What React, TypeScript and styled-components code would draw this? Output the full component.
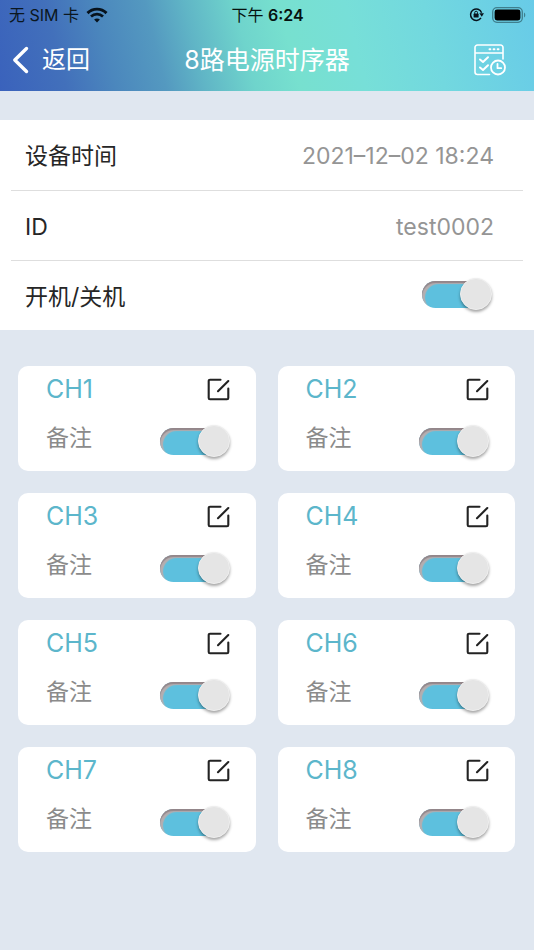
import React, { useState } from "react";
import styled, { createGlobalStyle } from "styled-components";

const GlobalStyle = createGlobalStyle`
  *, *::before, *::after { box-sizing: border-box; }
  body {
    margin: 0;
    background: #e0e7f0;
    color: #262626;
    font-family: Inter, "Noto Sans CJK SC", sans-serif;
  }
  button { font: inherit; color: inherit; border: 0; padding: 0; background: none; cursor: pointer; }
`;

const Header = styled.header`
  color: #fff;
  background: linear-gradient(76deg, #3a62bc 0%, #4270bb 12%, #4b87bd 21%, #5499c0 30%, #60b5c6 37%, #6fd4cc 46%, #77e0cf 54%, #77dfd8 66%, #72d8df 80%, #68cbe8 100%);
`;

const StatusBar = styled.div`
  display: grid;
  grid-template-columns: 1fr auto 1fr;
  align-items: center;
  height: 29px;
  padding: 0 8px 0 9px;
  color: #0b1720;
  font-size: 16px;
  line-height: 24px;
`;

const Carrier = styled.div`
  display: flex;
  align-items: center;
  gap: 7px;
`;

const Clock = styled.time`
  color: #06120f;
`;

const ClockDigits = styled.span`
  font-weight: 600;
`;

const StatusIcons = styled.div`
  display: flex;
  align-items: center;
  justify-content: flex-end;
  gap: 8px;
`;

const NavBar = styled.div`
  display: grid;
  grid-template-columns: 1fr auto 1fr;
  align-items: center;
  height: 62px;
  padding: 0 12px;
`;

const BackButton = styled.button`
  display: flex;
  align-items: center;
  justify-self: start;
  gap: 12px;
  font-size: 24px;
  line-height: 32px;
`;

const Title = styled.h1`
  margin: 0;
  font-size: 25px;
  font-weight: 400;
  line-height: 36px;
`;

const ScheduleButton = styled.button`
  display: flex;
  justify-self: end;
  margin-right: 16px;
`;

const Panel = styled.section`
  margin-top: 29px;
  padding: 0 11px;
  background: #fff;
`;

const InfoRow = styled.div<{ $control?: boolean }>`
  display: flex;
  align-items: ${(p) => (p.$control ? "flex-start" : "center")};
  justify-content: space-between;
  height: 70px;
  padding: ${(p) => (p.$control ? "17px 31px 0 14px" : "2px 29px 0 14px")};
  font-size: 23px;
  line-height: 38px;

  & + & { border-top: 1px solid #dedede; }
`;

const Value = styled.span`
  color: #959595;
`;

const Switch = styled.input`
  appearance: none;
  position: relative;
  flex: none;
  width: 70px;
  height: 32px;
  margin: 0;
  cursor: pointer;

  &::before {
    content: "";
    position: absolute;
    inset: 3px 4px 2px 0;
    border-radius: 14px;
    background: #c4c4c6;
    box-shadow: inset 0 2px 1px #93868a, inset 3px 3px 1px #b5aeb0;
  }
  &:checked::before {
    background: #5dc0de;
  }
  &::after {
    content: "";
    position: absolute;
    top: 0;
    left: 0;
    width: 32px;
    height: 32px;
    border: 1px solid #efefef;
    border-radius: 50%;
    background: #e5e5e5;
    box-shadow: 0 2px 3px rgba(0, 0, 0, 0.35);
  }
  &:checked::after { left: 38px; }
`;

const ChannelGrid = styled.main`
  display: grid;
  grid-template-columns: 1fr 1fr;
  gap: 22px;
  padding: 36px 19px 36px 18px;
`;

const ChannelCard = styled.article`
  display: flex;
  flex-direction: column;
  gap: 12px;
  height: 105px;
  padding: 5px 26px 0 28px;
  border-radius: 10px;
  background: #fff;
`;

const CardRow = styled.div`
  display: flex;
  align-items: center;
  justify-content: space-between;
  height: 36px;
`;

const NoteRow = styled(CardRow)`
  align-items: flex-end;
  height: 38px;
`;

const ChannelName = styled.h2`
  margin: 0;
  color: #5cb6cb;
  font-size: 25px;
  font-weight: 400;
  line-height: 36px;
`;

const Note = styled.span`
  color: #8b8b8b;
  font-size: 23px;
  line-height: 38px;
`;

const EditButton = styled.button`
  display: flex;
`;

const WifiIcon = () => (
  <svg width="22" height="16" viewBox="0 0 22 16" fill="none" stroke="#07121c" aria-hidden="true">
    <path d="M1.5 6.1C6.8 .8 15.2.8 20.5 6.1" strokeWidth="2.9" />
    <path d="M5 9.6c3.5-3.3 8.500-3.300 12 0" strokeWidth="2.700" />
    <path d="M11 15.400l-2.900-2.900c1.600-1.500 4.200-1.500 5.800 0z" fill="#07121c" stroke="none" />
  </svg>
);

const RotationLockIcon = () => (
  <svg width="15" height="15" viewBox="0 0 15 15" fill="none" stroke="#07121c" aria-hidden="true">
    <path d="M12 10.900a5.700 5.700 0 1 1 .6-5.200" strokeWidth="1.500" />
    <path d="M10.300 6.300h4.700l-2.200 3.400z" fill="#07121c" stroke="none" />
    <rect x="4.600" y="6.600" width="5" height="3.900" rx=".6" fill="#07121c" stroke="none" />
    <path d="M5.700 6.800V5.600a1.400 1.400 0 0 1 2.800 0v1.200" strokeWidth="1" />
  </svg>
);

const BatteryIcon = () => (
  <svg width="34" height="16" viewBox="0 0 34 16" fill="none" aria-hidden="true">
    <rect x=".7" y=".7" width="29.600" height="14.600" rx="4.200" stroke="#3f7f8e" strokeWidth="1.300" />
    <rect x="2.600" y="2.600" width="25.800" height="10.800" rx="2.400" fill="#000" />
    <path d="M32 5.500v5c1.700-.8 1.700-4.200 0-5z" fill="#3f7f8e" />
  </svg>
);

const BackIcon = () => (
  <svg width="18" height="28" viewBox="0 0 18 28" fill="none" stroke="#fff" strokeWidth="3.400" strokeLinecap="round" strokeLinejoin="round" aria-hidden="true">
    <path d="M14.500 2.500 2.800 14l11.700 11.500" />
  </svg>
);

const ScheduleIcon = () => (
  <svg width="32" height="32" viewBox="0 0 32 32" fill="none" stroke="#fff" strokeWidth="1.600" strokeLinecap="round" strokeLinejoin="round" aria-hidden="true">
    <path d="M15.500 30.500H3.500a2.500 2.500 0 0 1-2.500-2.500V3.500A2.500 2.500 0 0 1 3.500 1h23A2.500 2.500 0 0 1 29 3.500V15M1 9h28" />
    <path d="M15.500 5.200h.8M19.600 5.200h.8M23.700 5.200h.8" strokeWidth="2" />
    <path d="m6 15.500 3 2.500 5-4.700M6 23.500l3 2.500 5-4.700" strokeWidth="2" />
    <circle cx="24" cy="23.500" r="7" strokeWidth="1.800" />
    <path d="M23.500 19.800v4.400h3.700" strokeWidth="1.800" />
  </svg>
);

const EditIcon = () => (
  <svg width="23" height="23" viewBox="0 0 23 23" fill="none" stroke="#232323" strokeWidth="2.100" strokeLinecap="round" strokeLinejoin="round" aria-hidden="true">
    <path d="M13.500 1.700H3A1.300 1.300 0 0 0 1.700 3v17A1.300 1.300 0 0 0 3 21.300h17a1.300 1.300 0 0 0 1.300-1.300v-9.500" />
    <path d="M11 13.200 21.300 3" />
  </svg>
);

const channels = ["CH1", "CH2", "CH3", "CH4", "CH5", "CH6", "CH7", "CH8"];

function Channel({ name }: { name: string }) {
  const [on, setOn] = useState(true);
  const noteId = `${name}-note`;
  return (
    <ChannelCard>
      <CardRow>
        <ChannelName id={name}>{name}</ChannelName>
        <EditButton type="button" aria-label={`${name} 备注`}>
          <EditIcon />
        </EditButton>
      </CardRow>
      <NoteRow>
        <Note id={noteId}>备注</Note>
        <Switch type="checkbox" role="switch" aria-labelledby={`${name} ${noteId}`} checked={on} onChange={(e) => setOn(e.target.checked)} />
      </NoteRow>
    </ChannelCard>
  );
}

export default function App() {
  const [power, setPower] = useState(true);
  return (
    <>
      <GlobalStyle />
      <Header>
        <StatusBar>
          <Carrier>
            <span>无 SIM 卡</span>
            <WifiIcon />
          </Carrier>
          <Clock>下午 <ClockDigits>6:24</ClockDigits></Clock>
          <StatusIcons>
            <RotationLockIcon />
            <BatteryIcon />
          </StatusIcons>
        </StatusBar>
        <NavBar>
          <BackButton type="button">
            <BackIcon />
            返回
          </BackButton>
          <Title>8路电源时序器</Title>
          <ScheduleButton type="button" aria-label="定时">
            <ScheduleIcon />
          </ScheduleButton>
        </NavBar>
      </Header>
      <Panel>
        <InfoRow>
          <span>设备时间</span>
          <Value>2021–12–02 18:24</Value>
        </InfoRow>
        <InfoRow>
          <span>ID</span>
          <Value>test0002</Value>
        </InfoRow>
        <InfoRow $control>
          <label htmlFor="power">开机/关机</label>
          <Switch id="power" type="checkbox" role="switch" checked={power} onChange={(e) => setPower(e.target.checked)} />
        </InfoRow>
      </Panel>
      <ChannelGrid>
        {channels.map((name) => (
          <Channel key={name} name={name} />
        ))}
      </ChannelGrid>
    </>
  );
}
